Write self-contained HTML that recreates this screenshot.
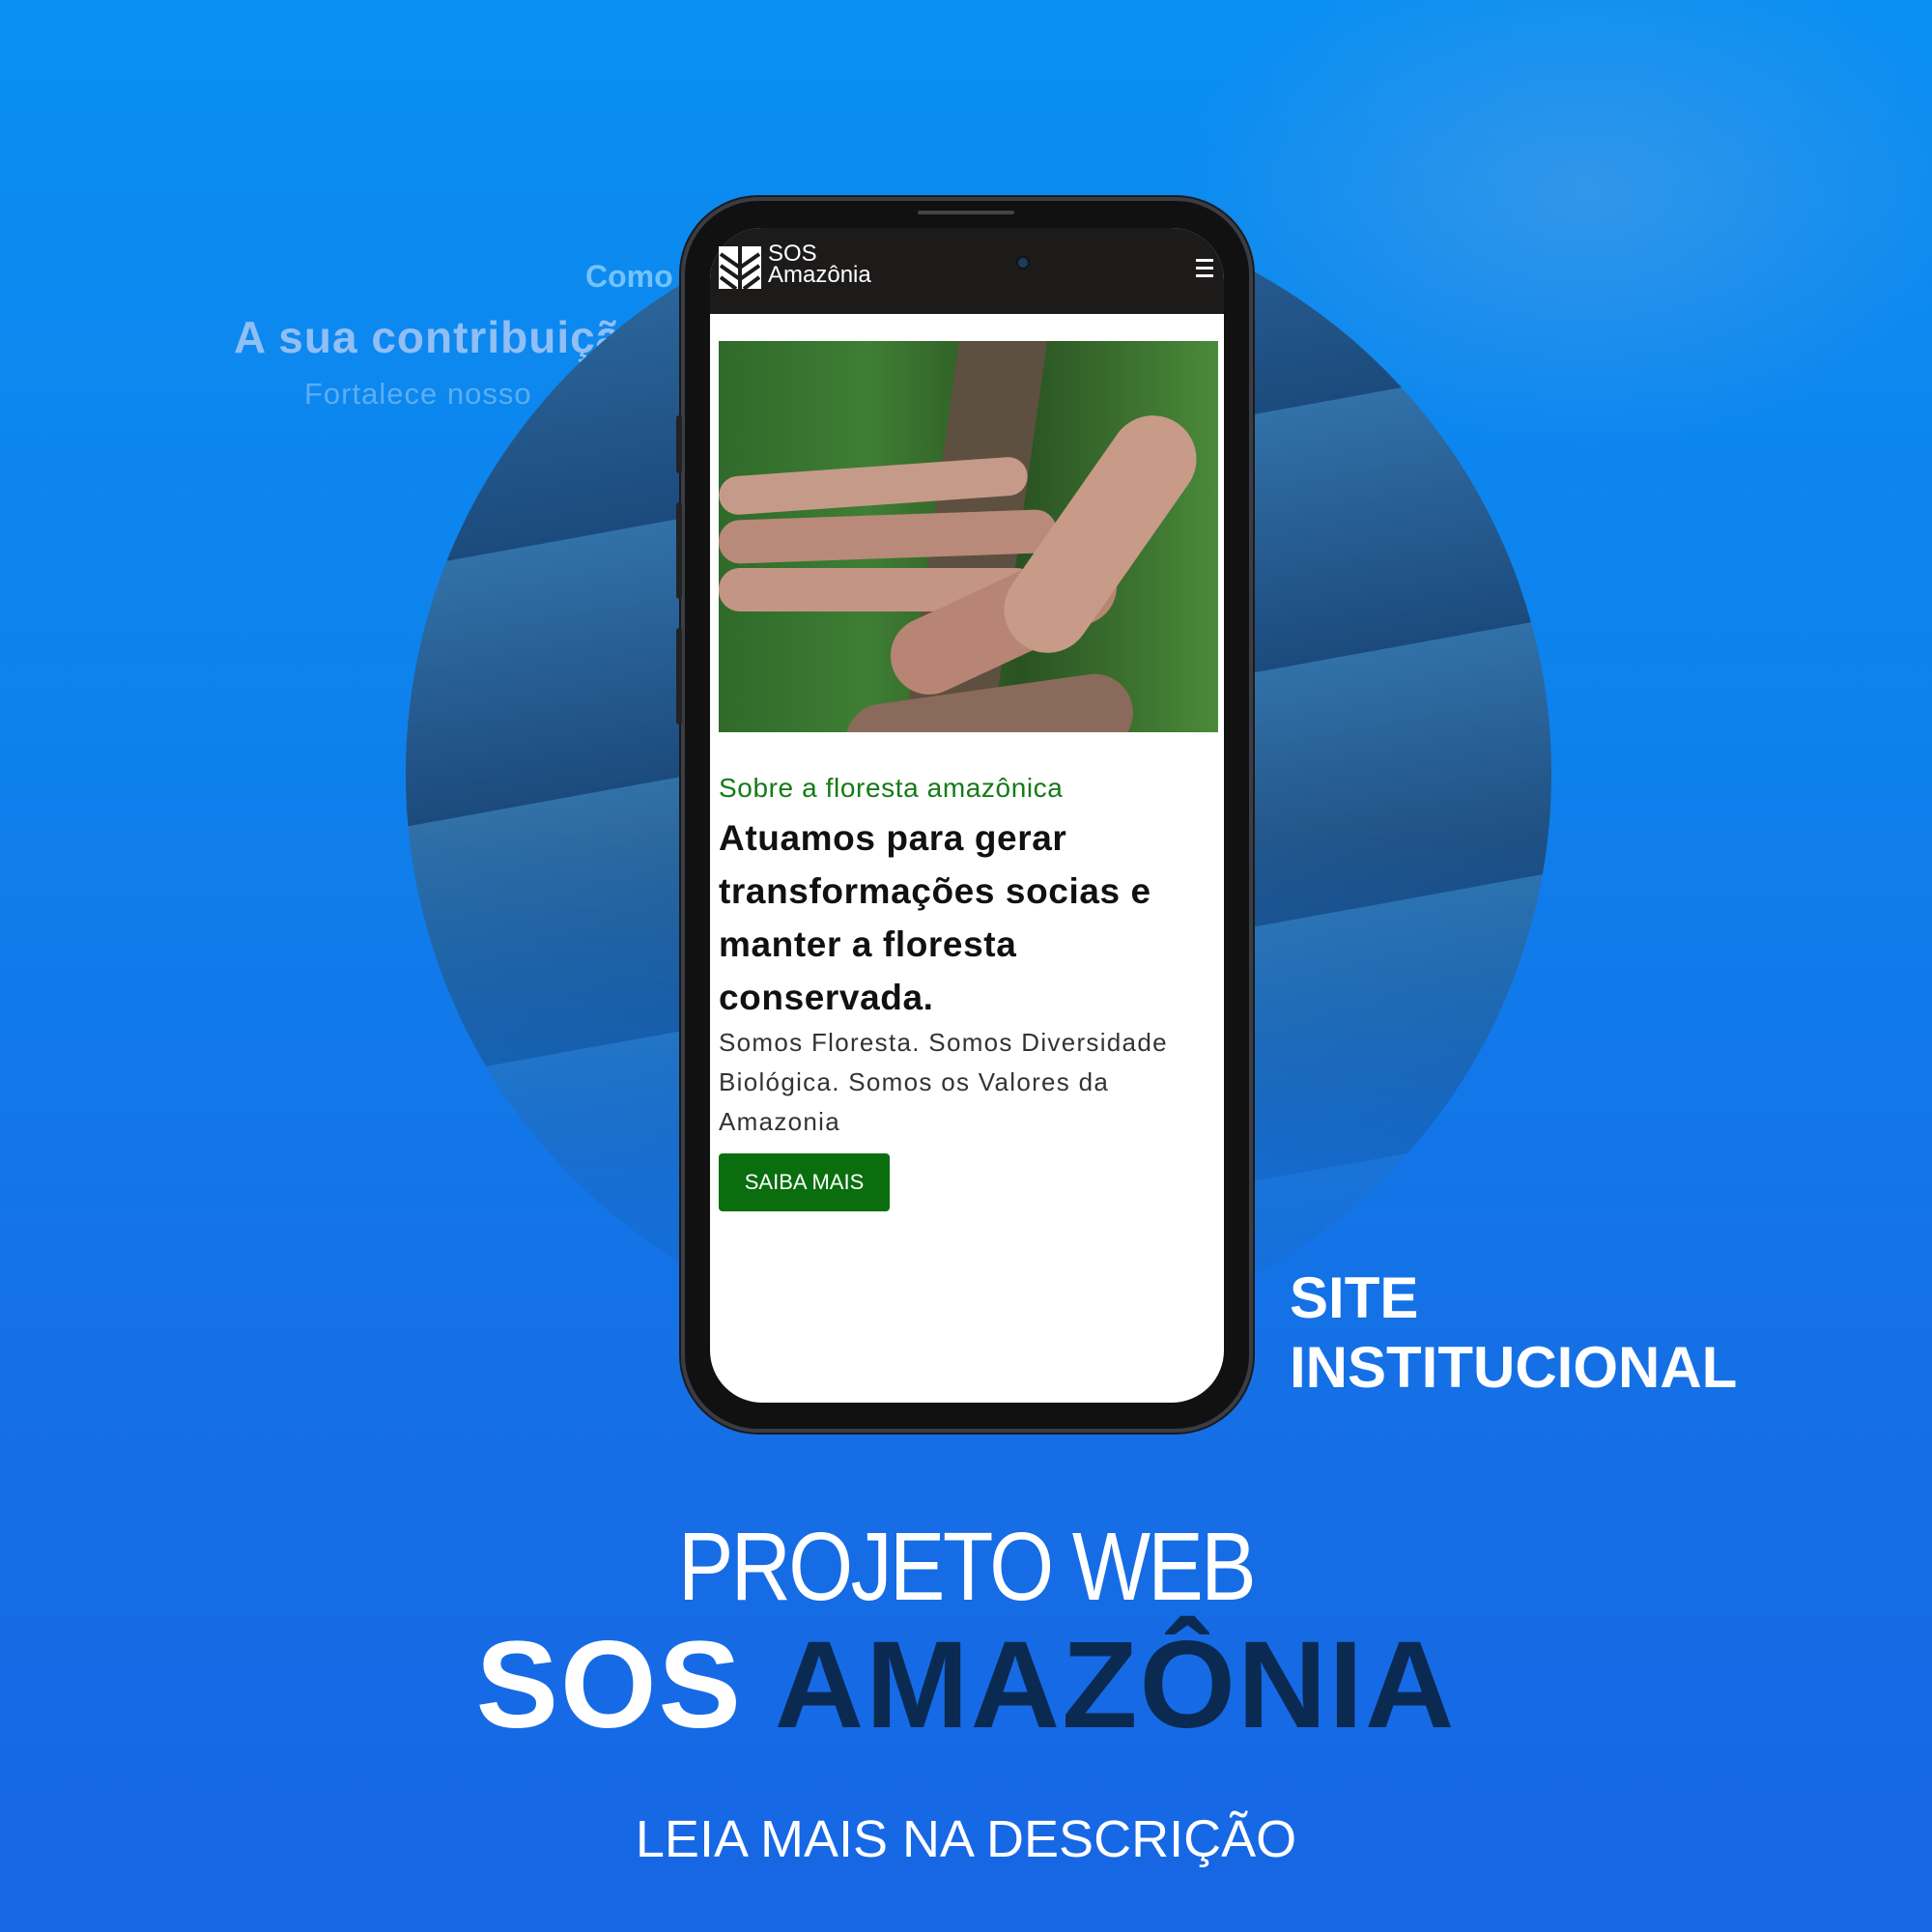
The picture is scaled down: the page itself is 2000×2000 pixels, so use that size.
<!DOCTYPE html>
<html><head><meta charset="utf-8"><style>
*{margin:0;padding:0;box-sizing:border-box}
body{width:2000px;height:2000px;overflow:hidden;position:relative;font-family:"Liberation Sans",sans-serif;background:linear-gradient(180deg,#0a8ff2 0%,#0e80ec 40%,#1570e6 70%,#1766e4 100%)}
.abs{position:absolute}
.t{white-space:nowrap}
</style></head><body>
<div class="abs t" style="left:606px;top:268px;font-size:32px;font-weight:bold;color:#8fd0ff;opacity:.8">Como</div>
<div class="abs t" style="left:242px;top:322px;font-size:46px;font-weight:bold;color:#a9c8f5;opacity:.85;letter-spacing:1px">A sua contribuição</div>
<div class="abs t" style="left:315px;top:390px;font-size:31px;color:#6fb8f5;opacity:.8;letter-spacing:1px">Fortalece nosso</div>
<svg class="abs" style="left:0;top:0" width="2000" height="2000">
<defs>
<clipPath id="c"><circle cx="1013" cy="801" r="593"/></clipPath>
<linearGradient id="b" x1="0" y1="0" x2="0" y2="1"><stop offset="0" stop-color="#3171a8"/><stop offset="1" stop-color="#1c4a7c"/></linearGradient>
<linearGradient id="fade" x1="0" y1="0" x2="0" y2="1"><stop offset="0" stop-color="#fff"/><stop offset="0.55" stop-color="#fff"/><stop offset="0.85" stop-color="#fff" stop-opacity="0.25"/><stop offset="1" stop-color="#fff" stop-opacity="0"/></linearGradient>
<mask id="m"><rect x="400" y="200" width="1240" height="1200" fill="url(#fade)"/></mask>
<radialGradient id="face" cx="0.5" cy="0.5" r="0.5"><stop offset="0" stop-color="#6aa6e0" stop-opacity="0.4"/><stop offset="1" stop-color="#6aa6e0" stop-opacity="0"/></radialGradient>
</defs>
<ellipse cx="1640" cy="200" rx="420" ry="260" fill="url(#face)"/>
<g clip-path="url(#c)" mask="url(#m)">
<g transform="rotate(-10.3 1013 801)">
<rect x="300" y="150" width="1500" height="336" fill="url(#b)"/>
<rect x="300" y="486" width="1500" height="263" fill="url(#b)"/>
<rect x="300" y="749" width="1500" height="259" fill="url(#b)"/>
<rect x="300" y="1008" width="1500" height="259" fill="url(#b)"/>
<rect x="300" y="1267" width="1500" height="200" fill="url(#b)"/>
</g></g>
</svg>

<!-- phone -->
<div class="abs" style="left:705px;top:204px;width:592px;height:1279px;border-radius:80px;background:#111;border:4px solid #3a3d45;box-shadow:0 0 0 2px #1a1a1a"></div>
<div class="abs" style="left:700px;top:430px;width:6px;height:60px;background:#222;border-radius:3px"></div>
<div class="abs" style="left:700px;top:520px;width:6px;height:100px;background:#222;border-radius:3px"></div>
<div class="abs" style="left:700px;top:650px;width:6px;height:100px;background:#222;border-radius:3px"></div>
<div class="abs" style="left:735px;top:236px;width:532px;height:1216px;border-radius:54px;overflow:hidden;background:#fff">
  <div style="height:89px;background:#1d1a1a"></div>
</div>
<div class="abs" style="left:950px;top:218px;width:100px;height:4px;background:#444;border-radius:2px"></div>
<div class="abs" style="left:1052px;top:265px;width:14px;height:14px;border-radius:50%;background:#233a55;border:2px solid #0c1422"></div>
<svg class="abs" style="left:744px;top:255px" width="44" height="44" viewBox="0 0 44 44">
<rect width="44" height="44" fill="#fff"/>
<g stroke="#1d1a1a" stroke-width="4" fill="none"><path d="M22 0V44M2 8l20 14 20-14M2 20l20 14 20-14M2 32l16 12M42 32L26 44"/></g>
</svg>
<div class="abs" style="left:795px;top:252px;font-size:24px;line-height:22px;color:#fff">SOS<br>Amazônia</div>
<div class="abs" style="left:1238px;top:268px;width:18px;height:3px;background:#fff;box-shadow:0 8px 0 #fff,0 16px 0 #fff"></div>

<!-- photo -->
<div class="abs" style="left:744px;top:353px;width:517px;height:405px;overflow:hidden;background:linear-gradient(90deg,#2f6a2a,#3f7e34 30%,#2a5222 60%,#4a8a3a)">
  <div class="abs" style="left:220px;top:-20px;width:90px;height:460px;background:#5e5040;transform:rotate(8deg)"></div>
  <div class="abs" style="left:0;top:130px;width:320px;height:40px;background:#c69a88;border-radius:20px;transform:rotate(-4deg)"></div>
  <div class="abs" style="left:0;top:180px;width:350px;height:45px;background:#b98a7a;border-radius:22px;transform:rotate(-2deg)"></div>
  <div class="abs" style="left:0;top:235px;width:330px;height:45px;background:#c49585;border-radius:22px"></div>
  <div class="abs" style="left:170px;top:250px;width:250px;height:80px;background:#b88575;border-radius:40px;transform:rotate(-25deg)"></div>
  <div class="abs" style="left:350px;top:60px;width:90px;height:280px;background:#c89a88;border-radius:45px;transform:rotate(35deg)"></div>
  <div class="abs" style="left:130px;top:360px;width:300px;height:80px;background:#8a6a5a;border-radius:40px;transform:rotate(-8deg)"></div>
</div>

<div class="abs t" style="left:744px;top:800px;font-size:28px;color:#157a17;letter-spacing:0.6px">Sobre a floresta amazônica</div>
<div class="abs t" style="left:744px;top:840px;font-size:37px;font-weight:bold;line-height:55px;color:#111;letter-spacing:0.6px">Atuamos para gerar<br>transformações socias e<br>manter a floresta<br>conservada.</div>
<div class="abs t" style="left:744px;top:1059px;font-size:26px;line-height:41px;color:#333;letter-spacing:1.3px">Somos Floresta. Somos Diversidade<br>Biológica. Somos os Valores da<br>Amazonia</div>
<div class="abs t" style="left:744px;top:1194px;width:177px;height:60px;background:#0a6e0e;border-radius:4px;color:#fff;font-size:22px;line-height:60px;text-align:center">SAIBA MAIS</div>

<div class="abs" style="left:1335px;top:1308px;font-size:60px;font-weight:bold;line-height:72px;color:#fff">SITE<br>INSTITUCIONAL</div>

<div class="abs t" style="left:0;width:2000px;top:1562px;text-align:center;font-size:100px;line-height:120px;color:#fff;letter-spacing:-3px;transform:scaleX(0.86)">PROJETO WEB</div>
<div class="abs t" style="left:0;width:2000px;top:1670px;text-align:center;font-size:128px;line-height:150px;font-weight:bold;color:#fff;letter-spacing:2px">SOS <span style="color:#0b2a52">AMAZÔNIA</span></div>
<div class="abs t" style="left:0;width:2000px;top:1868px;text-align:center;font-size:54px;line-height:72px;color:#fff">LEIA MAIS NA DESCRIÇÃO</div>
</body></html>
